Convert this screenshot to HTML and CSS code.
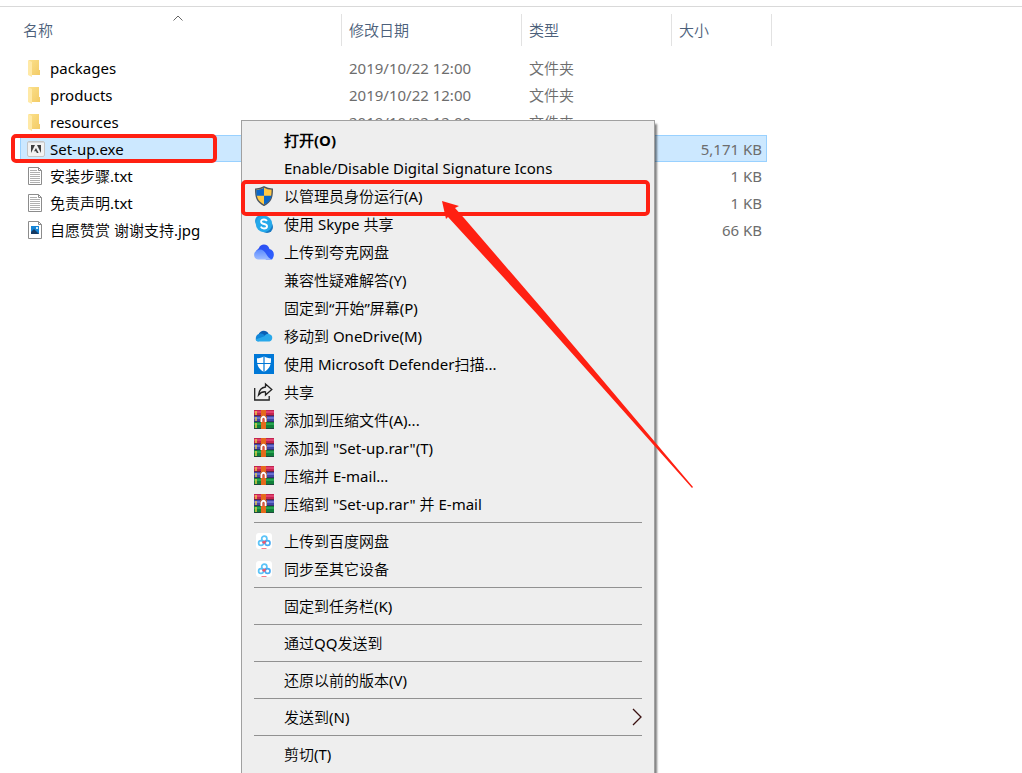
FILE: index.html
```html
<!DOCTYPE html>
<html lang="zh-CN">
<head>
<meta charset="utf-8">
<title>Set-up</title>
<link rel="stylesheet" href="styles.css">
</head>
<body>
<svg class="defs" aria-hidden="true">
  <defs>
    <linearGradient id="fold" x1="0" y1="0" x2="1" y2="1"><stop offset="0" stop-color="#fbe08a"/><stop offset="1" stop-color="#f3cb66"/></linearGradient>
    <linearGradient id="quark" x1="0" y1="0" x2="1" y2="1"><stop offset="0" stop-color="#2a4bf0"/><stop offset="1" stop-color="#2f62ff"/></linearGradient>
    <linearGradient id="quarkLight" x1="0" y1="0" x2="0" y2="1"><stop offset="0" stop-color="#5c8bff"/><stop offset="1" stop-color="#9dbcff"/></linearGradient>
    <symbol id="i-folder" viewBox="0 0 18 18">
      <path d="M2 1h10v10h1v5H5L2 14z" fill="url(#fold)"/>
      <path d="M1 1l4 2v15l-4-2z" fill="#ffe9a6"/>
    </symbol>
    <symbol id="i-exe" viewBox="0 0 18 18">
      <rect x=".5" y="1.500" width="17" height="15" rx="1.500" fill="#f2f2f2" stroke="#c4c4c4"/>
      <path d="M1 2.500h16" stroke="#d5d9dc"/>
      <path d="M4 5h4L4 13zM10 5h4v8zM9 8l2.600 5H9.800L9 11.300H7z" fill="#3f3f3f"/>
    </symbol>
    <symbol id="i-txt" viewBox="0 0 18 18">
      <path d="M1.500.5h10l3 3v14h-13z" fill="#fff" stroke="#8c8c8c"/>
      <path d="M11.500.5v3h3" fill="none" stroke="#8c8c8c"/>
      <path d="M3 3.500h7M3 5.500h10M3 7.500h10M3 9.500h10M3 11.500h10M3 13.500h10M3 15.500h10" stroke="#b0b0b0"/>
    </symbol>
    <symbol id="i-jpg" viewBox="0 0 18 18">
      <path d="M1.500.5h10l3 3v14h-13z" fill="#fff" stroke="#8c8c8c"/>
      <path d="M11.500.5v3h3" fill="none" stroke="#8c8c8c"/>
      <path d="M4 5h8v8H4z" fill="#1584d6"/>
      <path d="M4 11l3-3 5 5H4z" fill="#173a63"/>
      <path d="M9 6h2v2H9z" fill="#c9ecff"/>
    </symbol>
    <symbol id="i-shield" viewBox="0 0 20 20">
      <path d="M10 .8c2.800 1.700 5.400 2.200 8.300 2.300 0 8-.9 12.500-8.300 16.200C2.600 15.600 1.700 11.100 1.700 3.100 4.600 3 7.200 2.500 10 .8z" fill="#ffc845" stroke="#4a5560" stroke-width="1.400"/>
      <path d="M10 1.700v8.100H2.500c-.3-1.900-.2-3.900-.2-6C5 3.600 7.500 3.200 10 1.700zM10 9.800h7.500c-.8 4.300-2.900 6.700-7.500 8.800z" fill="#0a66c8"/>
    </symbol>
    <symbol id="i-skype" viewBox="0 0 20 20">
      <circle cx="7" cy="7" r="6" fill="#2598dc"/><circle cx="13" cy="13" r="6" fill="#1778c2"/>
      <circle cx="10" cy="10" r="8.200" fill="#25a9ea"/>
      <path d="M12.900 7.100C12.200 5.900 11.200 5.500 10 5.500c-1.700 0-2.900.8-2.900 2.200 0 3.100 5.900 1.500 5.900 4.500 0 1.500-1.300 2.300-3 2.300-1.500 0-2.600-.6-3.200-1.800" fill="none" stroke="#fff" stroke-width="1.900"/>
    </symbol>
    <symbol id="i-quark" viewBox="0 0 20 20">
      <path d="M5 6C6 1.500 14 .8 15.500 7c4.500.8 5.800 6.500 2.500 10.500H12L2 9z" fill="url(#quark)"/>
      <path d="M4 8c3.500-1.200 6 .5 8.500 4.500 1.500 2.500 3 4.200 5.500 5H4C-.8 17-1.500 9.500 4 8z" fill="url(#quarkLight)"/>
    </symbol>
    <symbol id="i-onedrive" viewBox="0 0 20 20">
      <path d="M4.500 9C5 4.500 12 2.800 14.500 7.500L10 12z" fill="#0a5fb4"/>
      <path d="M5 8c2-.8 3.700-.3 5 .7l3 3-9 3.800C1 15 .8 9 5 8z" fill="#1286d8"/>
      <path d="M10.500 10.200c1.500-2.700 4-3 5.500-1.700 3.200.6 3 6.500-.5 7h-11c-1.500 0-2.600-.8-3-2z" fill="#28a8ea"/>
    </symbol>
    <symbol id="i-defender" viewBox="0 0 20 20">
      <path d="M0 0h20v20H0z" fill="#0078d7"/>
      <path d="M10 2.200c2.200 1.500 4.500 2 7 2.100.1 6.200-.8 10.300-7 13.700-6.200-3.400-7.100-7.500-7-13.700 2.500-.1 4.800-.6 7-2.100z" fill="#fff"/>
      <path d="M10 2v16M3 9.500h14" stroke="#0078d7" stroke-width="1.200"/>
    </symbol>
    <symbol id="i-share" viewBox="0 0 20 20">
      <path d="M.7 6v12h14.500v-4" fill="none" stroke="#222" stroke-width="1.300"/>
      <path d="M11.500 2l6.300 5.500-6.300 5.500v-3.200C8.500 9.500 6.500 10.500 4.500 13c.5-4 2.500-7.600 7-8z" fill="none" stroke="#222" stroke-width="1.300"/>
    </symbol>
    <symbol id="i-rar" viewBox="0 0 20 20">
      <path d="M0 0h20v6H0z" fill="#c3244f"/><path d="M0 1h20v2H0z" fill="#e04070"/>
      <path d="M0 6h20v6H0z" fill="#4146a8"/><path d="M0 7h20v2H0z" fill="#6a70d0"/>
      <path d="M0 12h20v7H0z" fill="#11803a"/><path d="M0 13h20v2H0z" fill="#28a550"/>
      <path d="M0 5.500h20M0 11.500h20M0 18.500h20" stroke="#2b2140" stroke-width=".6"/>
      <path d="M7 0h5v19H7z" fill="#e56a1c"/>
      <path d="M2 1v4M2 7v4M2 13v5" stroke="#f0d045" stroke-width="1.400"/>
      <path d="M6 6h7v6H6z" fill="#a8583c"/>
      <path d="M7.500 12V8.500Q9.500 5 11.500 8.500V12" fill="none" stroke="#fff" stroke-width="1.800"/>
      <path d="M9.500 8.500V12" stroke="#e94f3c" stroke-width="1.500"/>
    </symbol>
    <symbol id="i-baidu" viewBox="0 0 20 20">
      <rect x="2" y="2" width="16" height="16" rx="3" fill="#fff"/>
      <g fill="none" stroke-width="1.700"><circle cx="10.300" cy="7.800" r="2.600" stroke="#5cc4f8"/><circle cx="7" cy="12" r="2.400" stroke="#5cc4f8"/><circle cx="13.600" cy="12" r="2.400" stroke="#4aacf4"/>
      <path d="M8.500 10.500l2.300 2M10.300 10.300l1.600.6" stroke="#f0526b"/></g>
      <path d="M7.500 17.500h5" stroke="#f27c8c"/>
    </symbol>
  </defs>
</svg>

<main class="explorer">
  <table class="files">
    <colgroup><col class="c-name"><col class="c-date"><col class="c-type"><col class="c-size"></colgroup>
    <thead>
      <tr>
        <th scope="col" aria-sort="ascending">名称<svg class="sort" viewBox="0 0 10 6"><path d="M.5 5.500L5 1l4.500 4.500" fill="none" stroke="#666"/></svg></th>
        <th scope="col">修改日期</th><th scope="col">类型</th><th scope="col">大小</th>
      </tr>
    </thead>
    <tbody>
      <tr><td><span class="file"><svg><use href="#i-folder"/></svg>packages</span></td><td>2019/10/22 12:00</td><td>文件夹</td><td></td></tr>
      <tr><td><span class="file"><svg><use href="#i-folder"/></svg>products</span></td><td>2019/10/22 12:00</td><td>文件夹</td><td></td></tr>
      <tr><td><span class="file"><svg><use href="#i-folder"/></svg>resources</span></td><td>2019/10/22 12:00</td><td>文件夹</td><td></td></tr>
      <tr class="selected"><td><span class="file"><svg><use href="#i-exe"/></svg>Set-up.exe</span></td><td></td><td></td><td>5,171 KB</td></tr>
      <tr><td><span class="file"><svg><use href="#i-txt"/></svg>安装步骤.txt</span></td><td></td><td></td><td>1 KB</td></tr>
      <tr><td><span class="file"><svg><use href="#i-txt"/></svg>免责声明.txt</span></td><td></td><td></td><td>1 KB</td></tr>
      <tr><td><span class="file"><svg><use href="#i-jpg"/></svg>自愿赞赏 谢谢支持.jpg</span></td><td></td><td></td><td>66 KB</td></tr>
    </tbody>
  </table>

  <div class="menu" role="menu">
    <button role="menuitem" class="default"><svg></svg>打开(O)</button>
    <button role="menuitem"><svg></svg>Enable/Disable Digital Signature Icons</button>
    <button role="menuitem"><svg><use href="#i-shield"/></svg>以管理员身份运行(A)</button>
    <button role="menuitem"><svg><use href="#i-skype"/></svg>使用 Skype 共享</button>
    <button role="menuitem"><svg><use href="#i-quark"/></svg>上传到夸克网盘</button>
    <button role="menuitem"><svg></svg>兼容性疑难解答(Y)</button>
    <button role="menuitem"><svg></svg>固定到“开始”屏幕(P)</button>
    <button role="menuitem"><svg><use href="#i-onedrive"/></svg>移动到 OneDrive(M)</button>
    <button role="menuitem"><svg><use href="#i-defender"/></svg>使用 Microsoft Defender扫描...</button>
    <button role="menuitem"><svg><use href="#i-share"/></svg>共享</button>
    <button role="menuitem"><svg><use href="#i-rar"/></svg>添加到压缩文件(A)...</button>
    <button role="menuitem"><svg><use href="#i-rar"/></svg>添加到 "Set-up.rar"(T)</button>
    <button role="menuitem"><svg><use href="#i-rar"/></svg>压缩并 E-mail...</button>
    <button role="menuitem"><svg><use href="#i-rar"/></svg>压缩到 "Set-up.rar" 并 E-mail</button>
    <hr>
    <button role="menuitem"><svg><use href="#i-baidu"/></svg>上传到百度网盘</button>
    <button role="menuitem"><svg><use href="#i-baidu"/></svg>同步至其它设备</button>
    <hr>
    <button role="menuitem"><svg></svg>固定到任务栏(K)</button>
    <hr>
    <button role="menuitem"><svg></svg>通过QQ发送到</button>
    <hr>
    <button role="menuitem"><svg></svg>还原以前的版本(V)</button>
    <hr>
    <button role="menuitem" aria-haspopup="true"><svg></svg>发送到(N)<svg class="more" viewBox="0 0 10 18"><path d="M1 1l8 8-8 8" fill="none" stroke="#3a1010" stroke-width="1.300"/></svg></button>
    <hr>
    <button role="menuitem"><svg></svg>剪切(T)</button>
  </div>

  <svg class="marks" aria-hidden="true">
    <g fill="none" stroke="#ff2012" stroke-width="4">
      <rect x="13" y="136" width="202" height="25" rx="3"/>
      <rect x="243" y="182" width="405" height="32" rx="3"/>
    </g>
    <path d="M442 201L459 206L455 208L464 218L545 312L693 487L692 488L537 314L448 217L446 219z" fill="#ff2012"/>
  </svg>
</main>
</body>
</html>
```
FILE: styles.css
```css
* { box-sizing: border-box; }

body {
  margin: 0;
  background: #fff;
  color: #000;
  font: 15px/20px "Noto Sans", "Noto Sans CJK SC DemiLight", "Noto Sans CJK SC", sans-serif;
}

.defs { position: absolute; width: 0; height: 0; }

.explorer {
  position: relative;
  height: 100vh;
  overflow: hidden;
  padding-top: 6px;
}

.explorer::before {
  content: "";
  display: block;
  height: 7px;
  border-top: 1px solid #d9d9d9;
}

.files {
  width: 752px;
  margin-left: 20px;
  table-layout: fixed;
  border-collapse: separate;
  border-spacing: 0;
}

.c-name { width: 322px; }
.c-date { width: 180px; }
.c-type { width: 150px; }
.c-size { width: 100px; }

th {
  position: relative;
  height: 32px;
  padding: 0 7px;
  border-right: 1px solid #e2e2e2;
  color: #4c607a;
  font-weight: 400;
  text-align: left;
}

th:first-child { padding-left: 3px; }

thead::after { content: ""; display: block; height: 8px; }

.sort {
  position: absolute;
  top: 1px;
  left: 153px;
  width: 10px;
  height: 6px;
}

td {
  height: 27px;
  padding: 0 7px;
  color: #6d6d6d;
  white-space: nowrap;
}

td:first-child { color: #000; }

td:last-child {
  padding-right: 5px;
  border-right: 5px solid transparent;
  background-clip: padding-box;
  text-align: right;
}

.file {
  display: flex;
  align-items: center;
  gap: 5px;
}

.file svg { width: 18px; height: 18px; }

.selected td {
  background-color: #cce8ff;
  box-shadow: inset 0 1px #99d1ff, inset 0 -1px #99d1ff;
}

.selected td:first-child { box-shadow: inset 0 1px #99d1ff, inset 0 -1px #99d1ff, inset 1px 0 #99d1ff; }
.selected td:last-child { box-shadow: inset 0 1px #99d1ff, inset 0 -1px #99d1ff, inset -1px 0 #99d1ff; }

.menu {
  position: absolute;
  top: 120px;
  bottom: 0;
  left: 241px;
  width: 414px;
  padding: 5px 0 0;
  border: 1px solid #a0a0a0;
  border-bottom: 0;
  background: #eee;
  box-shadow: 2px 4px 2px rgba(0, 0, 0, 0.5);
}

.menu button {
  display: flex;
  align-items: center;
  gap: 10px;
  width: 100%;
  height: 28px;
  padding: 0 12px;
  border: 0;
  background: none;
  color: #000;
  font: inherit;
  text-align: left;
  white-space: nowrap;
}

.menu button svg { flex: none; width: 20px; height: 20px; }
.menu button .more { width: 10px; height: 18px; margin-left: auto; }
.menu .default { font-weight: 700; }

.menu hr {
  height: 1px;
  margin: 4px 12px;
  border: 0;
  background: #919191;
}

.marks {
  position: absolute;
  inset: 0;
  width: 100%;
  height: 100%;
  pointer-events: none;
}
```
